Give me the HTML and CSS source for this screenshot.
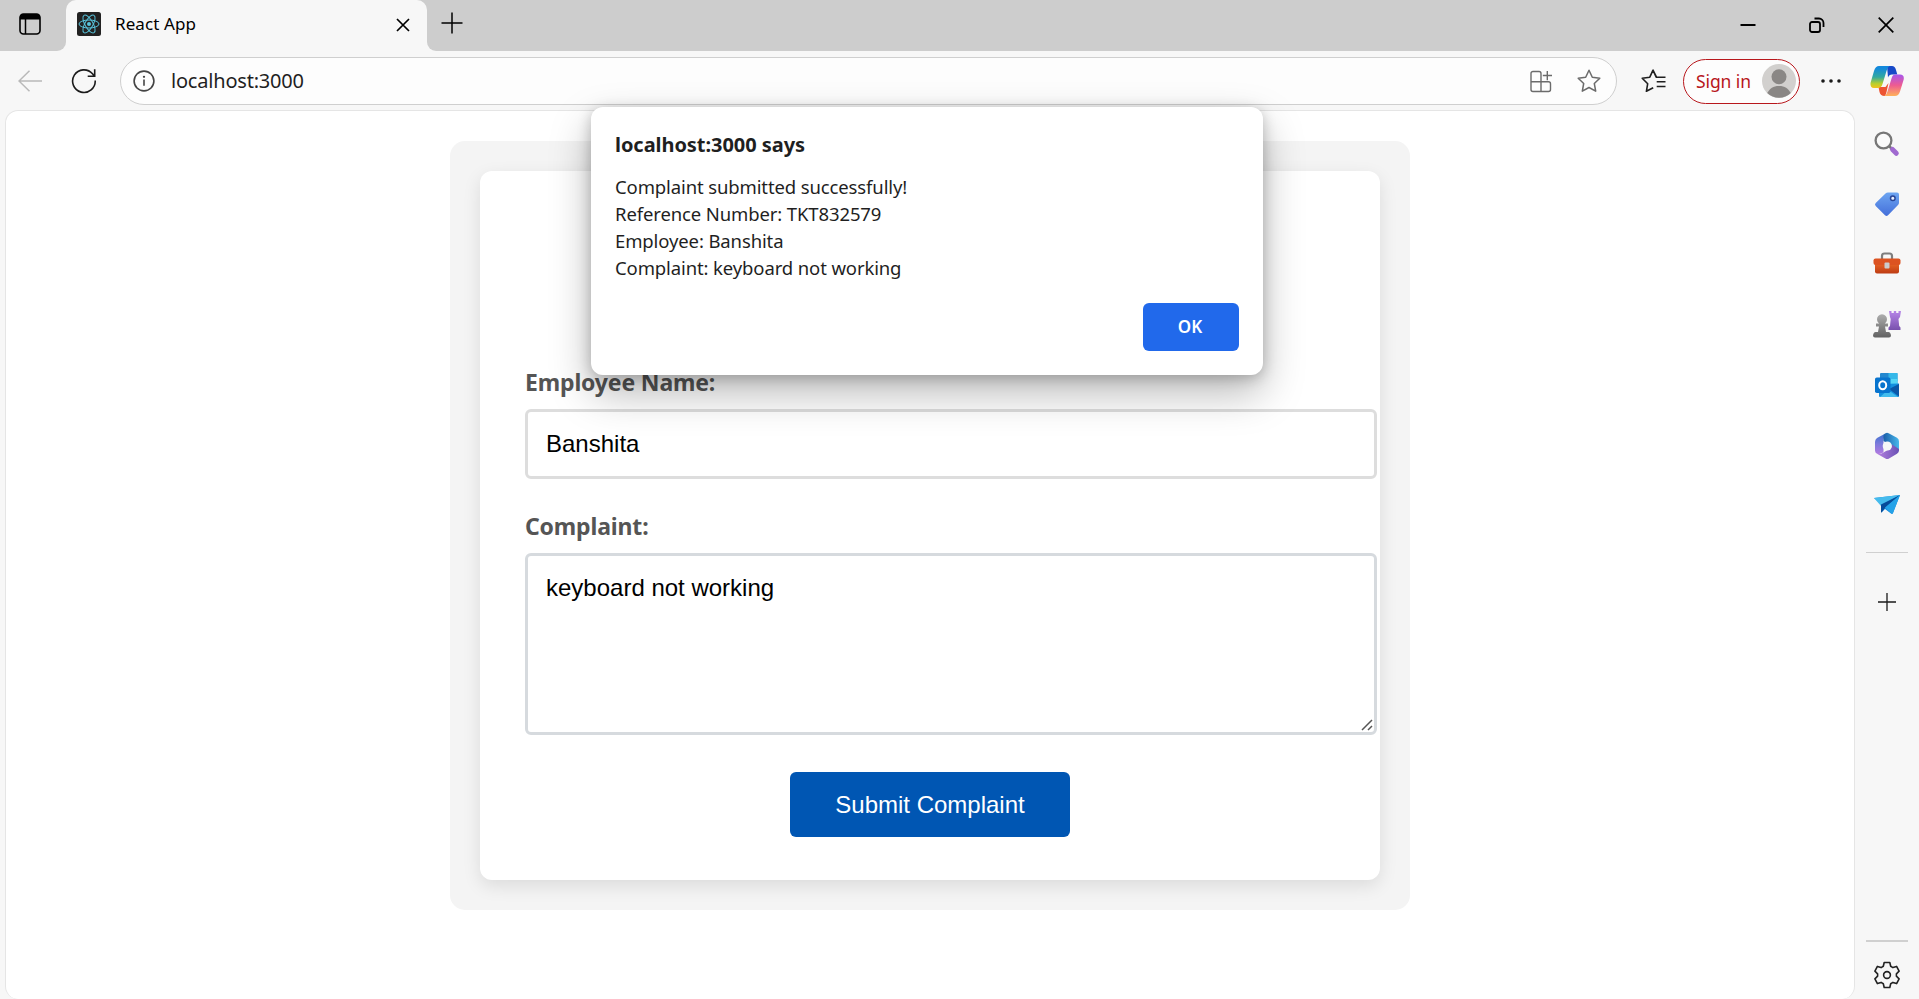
FILE: index.html
```html
<!DOCTYPE html>
<html lang="en">
<head>
<meta charset="utf-8">
<title>React App</title>
<link rel="stylesheet" href="styles.css">
</head>
<body>
<div class="tabstrip">
  <div class="tab-actions">
    <svg width="22" height="22" viewBox="0 0 22 22"><rect x="1" y="1" width="20" height="20" rx="3.5" fill="none" stroke="#000" stroke-width="1.6"/><path d="M1 6.500V4a3 3 0 0 1 3-3h14a3 3 0 0 1 3 3v2.500z" fill="#000"/><path d="M6.500 6v15" stroke="#000" stroke-width="1.500"/></svg>
  </div>
  <div class="tab">
    <svg class="favicon" width="24" height="24" viewBox="0 0 24 24"><rect width="24" height="24" rx="2.500" fill="#222"/><g fill="none" stroke="#58c4dc" stroke-width="1"><ellipse cx="12" cy="12" rx="10" ry="4"/><ellipse cx="12" cy="12" rx="10" ry="4" transform="rotate(60 12 12)"/><ellipse cx="12" cy="12" rx="10" ry="4" transform="rotate(120 12 12)"/></g><circle cx="12" cy="12" r="2" fill="#58c4dc"/></svg>
    <span class="tab-title">React App</span>
    <svg class="tab-close" width="14" height="14" viewBox="0 0 14 14"><path d="M1 1l12 12M13 1L1 13" stroke="#000" stroke-width="1.700"/></svg>
  </div>
  <div class="strip-rest">
    <svg class="new-tab" width="22" height="22" viewBox="0 0 22 22"><path d="M11 .5v21M.5 11h21" stroke="#000" stroke-width="1.500"/></svg>
    <div class="window-controls">
      <svg width="16" height="16" viewBox="0 0 16 16"><path d="M.5 8h15" stroke="#000" stroke-width="2"/></svg>
      <svg width="16" height="16" viewBox="0 0 16 16"><rect x="1" y="5" width="10" height="10" rx="2" fill="none" stroke="#000" stroke-width="1.800"/><path d="M5.500 1.500h4.500a4.500 4.500 0 0 1 4.500 4.500v4" fill="none" stroke="#000" stroke-width="1.800"/></svg>
      <svg width="16" height="16" viewBox="0 0 16 16"><path d="M.7.7l14.600 14.600M15.300.7L.7 15.300" stroke="#000" stroke-width="1.700"/></svg>
    </div>
  </div>
</div>

<div class="toolbar">
  <svg class="back" width="24" height="22" viewBox="0 0 24 22"><path d="M24 11H1M11.500.7L1 11l10.500 10.300" fill="none" stroke="#b9b9b9" stroke-width="1.500"/></svg>
  <svg class="reload" width="26" height="26" viewBox="0 0 26 26"><path d="M24.200 12.500A11.300 11.300 0 1 1 21.500 5.800L23.300 8M23.700 1.300v6.900h-7" fill="none" stroke="#1b1b1b" stroke-width="1.600"/></svg>
  <div class="address">
    <svg width="22" height="22" viewBox="0 0 22 22"><circle cx="11" cy="11" r="9.900" fill="none" stroke="#444" stroke-width="1.600"/><path d="M11 9.500v6.300" stroke="#444" stroke-width="1.600"/><circle cx="11" cy="6.800" r="1.150" fill="#444"/></svg>
    <span class="url">localhost:3000</span>
    <svg class="apps" width="22" height="23" viewBox="0 0 22 23"><path d="M11 11.700H1V3.500a2 2 0 0 1 2-2h6a2 2 0 0 1 2 2zM1 11.700V19.500a2 2 0 0 0 2 2h8v-9.800zM11 11.700h7.500a2 2 0 0 1 2 2v5.800a2 2 0 0 1-2 2H11M17.300 1v9.200M12.800 5.500H22" fill="none" stroke="#6b6b6b" stroke-width="1.400"/></svg>
    <svg class="star" width="24" height="24" viewBox="0 0 24 24"><path d="M12 1.200l3.300 7 7.500 1-5.500 5.300 1.400 7.700L12 18.500l-6.700 3.700 1.400-7.700L1.200 9.200l7.500-1z" fill="none" stroke="#6b6b6b" stroke-width="1.500" stroke-linejoin="round"/></svg>
  </div>
  <svg class="favorites" width="25" height="24" viewBox="0 0 25 24"><path d="M16 8.200h-.5L12 1.200 8.800 8.200l-7.600 1 5.500 5.500-1.300 7.600 6.800-3.600M12 1.200l3.200 7H24.500M15.700 12.800H24.500M15.700 17.500H24.500" fill="none" stroke="#1f1f1f" stroke-width="1.600" stroke-linejoin="round"/></svg>
  <div class="signin"><span>Sign in</span><svg width="34" height="34" viewBox="0 0 34 34"><circle cx="17" cy="17" r="17" fill="#d2d0ce"/><circle cx="17" cy="12.700" r="7.500" fill="#8a8785"/><path d="M5.200 29C8 24.500 11 22 17 22s9 2.500 11.800 7A17 17 0 0 1 5.200 29z" fill="#8a8785"/></svg></div>
  <svg class="more" width="20" height="4" viewBox="0 0 20 4"><g fill="#1a1a1a"><circle cx="2" cy="2" r="1.800"/><circle cx="10" cy="2" r="1.800"/><circle cx="18" cy="2" r="1.800"/></g></svg>
  <svg class="copilot" width="34" height="32" viewBox="0 0 34 32">
    <defs>
      <linearGradient id="cpA" x1="0" y1="0" x2="0" y2="1"><stop offset=".1" stop-color="#1389dc"/><stop offset=".5" stop-color="#31a8a0"/><stop offset=".8" stop-color="#b8cf2d"/><stop offset="1" stop-color="#f3c21b"/></linearGradient>
      <linearGradient id="cpB" x1="0" y1="0" x2="0" y2="1"><stop offset="0" stop-color="#a756ed"/><stop offset=".5" stop-color="#ee5b91"/><stop offset="1" stop-color="#ffb25a"/></linearGradient>
    </defs>
    <path d="M17 1h5q3 0 4 4l1.300 4.500H22q-3 0-4 3z" fill="#1749c8"/>
    <path d="M8.500 22h7l3-4-2 9q-1 4-2 4-4 0-5-4z" fill="#ed5432"/>
    <path d="M9 1h10.500q-2 1-3 5L12.500 19q-1 4-5 4H4q-4 0-3.500-5L4 6Q5.500 1 9 1z" fill="url(#cpA)"/>
    <path d="M25 9.500h5q4.500 0 3.700 5L30 26.500q-1.500 4.500-5 4.500H14.500q2-1 3-4.500l4-13q1-4 3.500-4z" fill="url(#cpB)"/>
  </svg>
</div>

<div class="workspace">
  <main class="page">
    <div class="container">
      <form class="card">
        <label for="name">Employee Name:</label>
        <input id="name" class="name-field" type="text" value="Banshita">
        <label class="second" for="complaint">Complaint:</label>
        <div class="area">
          <textarea id="complaint">keyboard not working</textarea>
          <svg class="grip" width="12" height="12" viewBox="0 0 12 12"><path d="M1 11L11 1M7 11l4-4" stroke="#555" stroke-width="1.500"/></svg>
        </div>
        <button class="submit" type="button">Submit Complaint</button>
      </form>
    </div>
  </main>
  <aside class="sidebar">
    <svg width="26" height="26" viewBox="0 0 26 26"><path d="M14.500 14.500l3 3" stroke="#777" stroke-width="2.500"/><circle cx="9.500" cy="9.500" r="7.900" fill="#fafafa" stroke="#777" stroke-width="2.300"/><path d="M18.500 18.500l3.800 3.800" stroke="#a06ad0" stroke-width="5" stroke-linecap="round"/></svg>
    <svg width="26" height="26" viewBox="0 0 26 26"><defs><linearGradient id="tag" x1="0" y1="0" x2="0" y2="1"><stop offset="0" stop-color="#6da5f1"/><stop offset="1" stop-color="#446fda"/></linearGradient></defs><path d="M14 1.500h9q2 0 2 2v8q0 1.500-1 2.500L14 24.300q-1.500 1.400-3 0L1.700 15q-1.400-1.500 0-3L11.500 2.400q1-.9 2.500-.9z" fill="url(#tag)"/><circle cx="18.800" cy="7.200" r="2.300" fill="#eaf1ff" stroke="#294596" stroke-width="1.500"/></svg>
    <svg width="28" height="24" viewBox="0 0 28 24"><defs><linearGradient id="box" x1="0" y1="0" x2="0" y2="1"><stop offset="0" stop-color="#ea6625"/><stop offset="1" stop-color="#bd3c14"/></linearGradient></defs><path d="M9 8V5q0-2.500 2.500-2.500h5Q19 2.500 19 5v3" fill="none" stroke="#7e7e7e" stroke-width="2.200"/><path d="M2 12h24v8.500q0 2-2 2H4q-2 0-2-2z" fill="url(#box)"/><path d="M2.500 7.500h23q2 0 2 2V12q0 2-2 2h-23q-2 0-2-2V9.500q0-2 2-2z" fill="#dc5321"/><rect x="11.500" y="11.500" width="5" height="6" rx="1" fill="#ccc"/></svg>
    <svg width="28" height="28" viewBox="0 0 28 28"><defs><linearGradient id="pawn" x1="0" y1="0" x2="0" y2="1"><stop offset="0" stop-color="#adadad"/><stop offset="1" stop-color="#626262"/></linearGradient><linearGradient id="rook" x1="0" y1="0" x2="0" y2="1"><stop offset="0" stop-color="#b686e8"/><stop offset="1" stop-color="#7951ad"/></linearGradient></defs><path d="M16 1h2.500v2h2.300V1h2.400v2h2.300V1H28l-1 6-1.500 2 .7 7 1.300 1.500V20H15.500v-2.500l1.500-1.500.7-7L17 7z" fill="url(#rook)"/><path d="M6.200 13.500a5 5 0 1 1 5.600 0H15v3h-3l1 5.500h2.500q2 0 2.500 3.500 0 2-2 2H2q-2 0-2-2Q.5 22 2.500 22H5l1-5.500H3v-3z" fill="url(#pawn)"/></svg>
    <svg width="26" height="26" viewBox="0 0 26 26"><path d="M6 2q0-1 1-1h15.500q1 0 1 1v11H6z" fill="#2488cf"/><path d="M14.500 1h9v8h-9z" fill="#35b8e9"/><path d="M14.500 7h9v6h-9z" fill="#56d6f6"/><path d="M5 12l20-.5V24q0 1-1 1H6q-1 0-1-1z" fill="#1490df"/><path d="M25 12v12.500L15 17z" fill="#0a57a8"/><path d="M6 25h18L14 18z" fill="#43bced"/><rect x="1" y="5.500" width="15.500" height="15.500" rx="1.800" fill="#0874ce"/><ellipse cx="8.700" cy="13.200" rx="3.500" ry="4" fill="none" stroke="#fff" stroke-width="2"/></svg>
    <svg width="26" height="28" viewBox="0 0 26 28"><defs><linearGradient id="m3" x1="0" y1="0" x2="0" y2="1"><stop offset="0" stop-color="#3b72d0"/><stop offset=".5" stop-color="#7d7bdb"/><stop offset="1" stop-color="#b27ae0"/></linearGradient><linearGradient id="m4" x1="0" y1="0" x2="1" y2="0"><stop offset="0" stop-color="#b681e0"/><stop offset="1" stop-color="#6950b4"/></linearGradient><linearGradient id="m5" x1="0" y1="0" x2="1" y2="0"><stop offset="0" stop-color="#1b5fa8"/><stop offset="1" stop-color="#48b8ec"/></linearGradient></defs><path d="M11 1.700L3 6Q1 7.300 1 10v8.500q0 2.200 2 3.300 3.500 1 6.500-1.500V8z" fill="url(#m3)"/><path d="M9.500 9V3.500q0-1 1-1.500l1-.8q1.500-.8 3.100 0L23 5.800q2 1.300 2 3.700v9l-8-5z" fill="url(#m5)"/><path d="M25 17v1.500q0 2-2 3.200l-8 4.700q-1.800 1-3.600 0L3 21.800q3 1 6.500-1.200l7.500-4.600 1-3.500z" fill="url(#m4)"/><circle cx="13.300" cy="14" r="4.600" fill="#f7f7f7"/></svg>
    <svg width="26" height="22" viewBox="0 0 26 22"><path d="M0 4l26-3-7 18q-.6 1.700-2 .6L11 15l-3 3-1-8z" fill="#168bdd"/><path d="M0 4l26-3L7 12z" fill="#45bbed"/><path d="M26 1L7 10.500v8.500l4-5z" fill="#074b9a"/><path d="M26 1L11 13.500l6.500 6q1 .7 1.600-.8z" fill="#24a2e8"/></svg>
    <div class="divider"></div>
    <svg class="add" width="18" height="18" viewBox="0 0 18 18"><path d="M9 0v18M0 9h18" stroke="#1b1b1b" stroke-width="1.300"/></svg>
    <div class="divider bottom"></div>
    <svg class="settings" width="26" height="28" viewBox="0 0 26 28"><path d="M10.200 1.500h5.600l.9 3.800 2.200 1.300 3.700-1.200 2.500 4.800-2.700 2.600v2.400l2.700 2.600-2.500 4.800-3.700-1.200-2.200 1.300-.9 3.800h-5.600l-.9-3.800-2.200-1.300-3.700 1.200L.9 17.800l2.700-2.600v-2.400L.9 10.200l2.500-4.800 3.700 1.200 2.200-1.300z" fill="none" stroke="#222" stroke-width="1.600" stroke-linejoin="round"/><circle cx="13" cy="14" r="3.400" fill="none" stroke="#222" stroke-width="1.600"/></svg>
  </aside>
</div>

<div class="dialog" role="alertdialog">
  <h1>localhost:3000 says</h1>
  <p>Complaint submitted successfully!<br>Reference Number: TKT832579<br>Employee: Banshita<br>Complaint: keyboard not working</p>
  <button type="button">OK</button>
</div>
</body>
</html>
```
FILE: styles.css
```css
* { box-sizing: border-box; }
html, body { height: 100%; }
body {
  margin: 0;
  display: flex;
  flex-direction: column;
  overflow: hidden;
  background: #f7f7f7;
  color: #1f1f1f;
  font-family: "Noto Sans", "Open Sans", sans-serif;
}
svg { display: block; flex: none; }

/* Tab strip */
.tabstrip { display: flex; height: 51px; flex: none; background: #f7f7f7; }
.tab-actions { width: 66px; padding: 13px 0 0 19px; background: #cdcdcd; border-bottom-right-radius: 9px; }
.tab {
  width: 361px;
  display: flex;
  align-items: center;
  padding: 0 17px 3px 11px;
  background: linear-gradient(#cdcdcd 50%, #f7f7f7 50%);
  position: relative;
  isolation: isolate;
}
.tab::before { content: ""; position: absolute; inset: 0; z-index: -1; background: #f7f7f7; border-radius: 10px 10px 0 0; }
.tab-title { margin: 0 0 2px 14px; font-size: 17px; letter-spacing: 0.1px; color: #000; }
.tab-close { margin: 1px 0 0 auto; }
.strip-rest { flex: 1; display: flex; justify-content: space-between; background: #cdcdcd; border-bottom-left-radius: 9px; }
.new-tab { margin: 12px 0 0 14px; }
.window-controls { display: flex; gap: 53px; padding: 17px 25.500px 0 0; }

/* Toolbar */
.toolbar { display: flex; align-items: center; height: 60px; flex: none; padding-left: 18px; }
.reload { margin-left: 29px; }
.address {
  width: 1497px;
  height: 48px;
  margin-left: 23px;
  display: flex;
  align-items: center;
  padding: 0 15px 0 12px;
  border: 1.500px solid #cfcfcf;
  border-radius: 24px;
  background: #fdfdfd;
}
.url { margin-left: 16px; font-size: 20px; line-height: 28px; letter-spacing: -0.2px; }
.apps { margin-left: auto; }
.star { margin-left: 25px; }
.favorites { margin-left: 24px; }
.signin {
  width: 117px;
  height: 45px;
  margin-left: 17px;
  padding: 0 3px 0 12px;
  display: flex;
  align-items: center;
  justify-content: space-between;
  border: 1.500px solid #b8171c;
  border-radius: 23px;
  color: #b8171c;
  font-size: 17.500px;
  letter-spacing: -0.1px;
  background: #fdfdfd;
}
.more { margin-left: 20.500px; }
.copilot { margin-left: 29.500px; }

/* Page area and sidebar */
.workspace { flex: 1; display: flex; min-height: 0; margin-top: -1px; padding-left: 5px; }
.page { width: 1850px; padding: 30px 0 0 444px; background: #fff; border: 1px solid #e5e5e5; border-bottom: 0; border-radius: 13px; }
.container { width: 960px; height: 769px; padding: 30px; border-radius: 15px; background: #f4f4f4; }
.card {
  height: 709px;
  display: flex;
  flex-direction: column;
  padding: 195px 3px 0 45px;
  border-radius: 12px;
  background: #fff;
  box-shadow: 0 6px 18px rgba(0, 0, 0, 0.1);
}
label { height: 32px; line-height: 32px; font-size: 23px; font-weight: 700; color: #555; letter-spacing: -0.15px; align-self: flex-start; }
.second { margin-top: 31px; }
input, textarea {
  display: block;
  width: 852px;
  margin: 0;
  padding: 18px;
  border: 3px solid #ddd;
  border-radius: 6px;
  background: transparent;
  color: #000;
  font: 24px/28px "Liberation Sans", Arial, sans-serif;
  outline: none;
}
input { height: 70px; margin-top: 11px; }
.area { position: relative; width: 852px; margin-top: 11px; }
textarea { height: 182px; border-color: #d6dade; resize: none; }
.grip { position: absolute; right: 4px; bottom: 4px; }
.submit {
  width: 280px;
  height: 65px;
  margin: 37px 0 0 265px;
  padding: 0;
  border: 0;
  border-radius: 6px;
  background: #0056b3;
  color: #fff;
  font: 24px "Liberation Sans", Arial, sans-serif;
}

.sidebar { width: 64px; display: flex; flex-direction: column; align-items: center; padding-top: 21px; gap: 34.200px; }
.divider { width: 42px; height: 1px; margin-top: 2px; flex: none; background: #d0d0d0; }
.add { margin-top: 5px; }
.divider.bottom { height: 2px; margin-top: auto; }
.settings { margin: -15px 0 10px; }

/* Alert */
.dialog {
  position: absolute;
  left: 591px;
  top: 106.500px;
  width: 672px;
  height: 268px;
  padding: 24px;
  display: flex;
  flex-direction: column;
  border-radius: 12px;
  background: #fff;
  box-shadow: 0 18px 42px rgba(0, 0, 0, 0.28), 0 3px 14px rgba(0, 0, 0, 0.22);
}
.dialog h1 { margin: 0; font-size: 20px; line-height: 28px; letter-spacing: -0.05px; }
.dialog p { margin: 14px 0 0; font-size: 18.500px; line-height: 27px; letter-spacing: -0.12px; }
.dialog button {
  width: 96px;
  height: 48px;
  margin-top: auto;
  align-self: flex-end;
  padding: 0 2px 0 0;
  border: 0;
  border-radius: 6px;
  background: #2169eb;
  color: #fff;
  font: 600 17px "Noto Sans", sans-serif;
}
```
